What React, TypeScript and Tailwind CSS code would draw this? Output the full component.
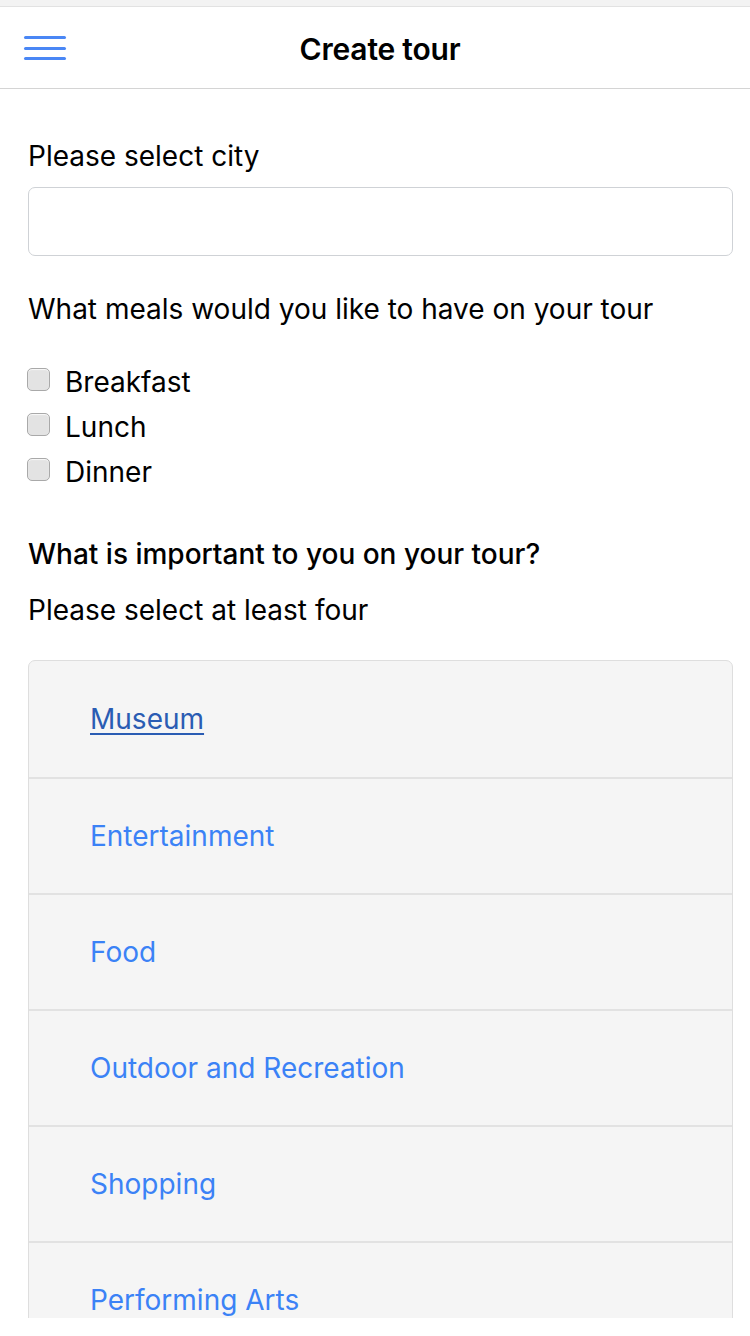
import React, { useState } from "react";

const meals = ["Breakfast", "Lunch", "Dinner"];
const interests = ["Museum", "Entertainment", "Food", "Outdoor and Recreation", "Shopping", "Performing Arts"];

const App = () => {
  const [checked, setChecked] = useState<string[]>([]);

  const toggle = (m: string) => {
    setChecked((prev) => (prev.includes(m) ? prev.filter((x) => x !== m) : [...prev, m]));
  };

  return (
    <div
      className="flex flex-col h-[1336px] bg-white text-black overflow-hidden"
      style={{ fontFamily: "Inter, 'Noto Sans', sans-serif" }}
    >
      <div className="h-[7px] shrink-0 bg-[#f3f3f3] border-b border-[#e2e2e2]" />
      <header className="h-[82px] shrink-0 flex items-center relative border-b border-[#d4d4d4]">
        <button className="absolute left-[24px] top-[29px] flex flex-col gap-[7.5px]">
          <span className="block w-[42px] h-[3px] rounded-full bg-[#4a87f5]" />
          <span className="block w-[42px] h-[3px] rounded-full bg-[#4a87f5]" />
          <span className="block w-[42px] h-[3px] rounded-full bg-[#4a87f5]" />
        </button>
        <h1 className="w-full text-center text-[30px] font-semibold tracking-[-0.2px] pl-[10px] pt-[3px]">Create tour</h1>
      </header>

      <main className="flex-1 min-h-0 overflow-hidden pl-[28px] pr-[17px] pt-[50px]">
        <label className="block text-[28px] leading-[34px]">Please select city</label>
        <input
          type="text"
          className="block w-full h-[69px] mt-[14px] rounded-[7px] border border-[#cfd2d6] bg-white outline-none"
        />

        <p className="text-[28px] leading-[34px] mt-[36px]">What meals would you like to have on your tour</p>

        <div className="mt-[38px] flex flex-col gap-[10px]">
          {meals.map((m) => (
            <label key={m} className="flex items-center h-[35px] cursor-pointer" onClick={() => toggle(m)}>
              <span
                className={
                  "w-[23px] h-[23px] -ml-[1px] rounded-[5px] border border-[#a9a9a9] shadow-[inset_0_1px_1px_rgba(255,255,255,0.8)] mb-[5px] " +
                  (checked.includes(m) ? "bg-[#4a87f5]" : "bg-[#e3e3e3]")
                }
              />
              <span className="ml-[15px] text-[28px]">{m}</span>
            </label>
          ))}
        </div>

        <p className="text-[28px] leading-[34px] font-medium mt-[48px]">What is important to you on your tour?</p>
        <p className="text-[28px] leading-[34px] mt-[22px]">Please select at least four</p>

        <ul className="mt-[33px] rounded-t-[7px] border border-[#dedede] bg-[#f5f5f5]">
          {interests.map((item, i) => (
            <li
              key={item}
              className={"h-[116px] flex items-center pl-[61px] " + (i > 0 ? "border-t-2 border-[#e2e2e2]" : "")}
            >
              <a
                href="#"
                className={
                  "text-[28px] " +
                  (i === 0 ? "text-[#2a5cb3] underline underline-offset-[4px]" : "text-[#3b82f6]")
                }
              >
                {item}
              </a>
            </li>
          ))}
        </ul>
      </main>
      <div className="h-[18px] shrink-0 bg-white" />
    </div>
  );
};

export default App;
